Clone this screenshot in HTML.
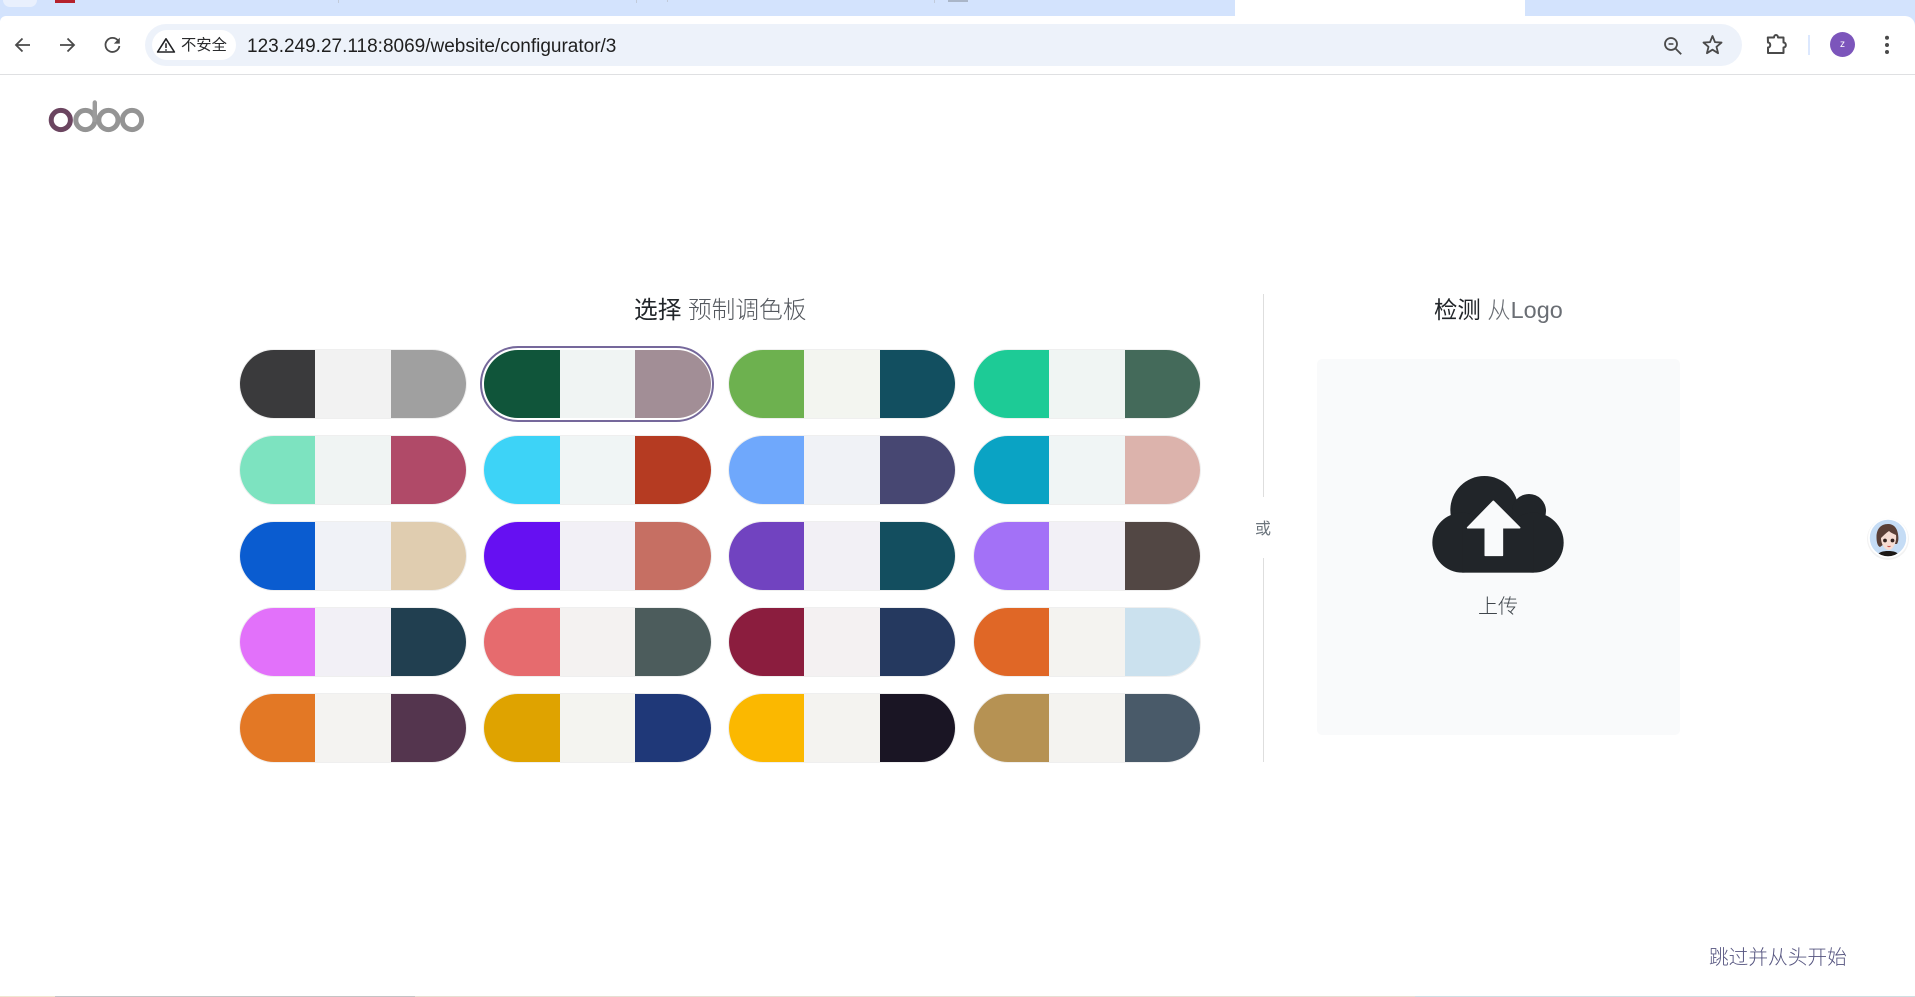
<!DOCTYPE html>
<html lang="zh">
<head>
<meta charset="utf-8">
<title>Odoo configurator</title>
<style>
html,body{margin:0;padding:0;background:#fff;width:1915px;height:997px;overflow:hidden}
body{position:relative;font-family:"Liberation Sans","Noto Sans CJK SC",sans-serif;color:#212529}
.a{position:absolute}
.t{position:absolute;white-space:nowrap;line-height:1}
.pill{position:absolute;width:226.5px;height:68px;border-radius:34px;overflow:hidden;display:flex;box-shadow:0 0 0 1px #efefef}
.pill i{display:block;flex:1 1 0}
.sel{position:absolute;border:2px solid #75689b;border-radius:40px;background:#fff;box-sizing:border-box}
</style>
</head>
<body>
<!-- tab strip -->
<div class="a" style="left:0;top:0;width:1915px;height:74px;background:#d3e3fd"></div>
<div class="a" style="left:1235px;top:0;width:290px;height:16px;background:#fff"></div>
<div class="a" style="left:1215px;top:0;width:20px;height:16px;background:#d3e3fd;border-bottom-right-radius:10px"></div>
<div class="a" style="left:1525px;top:0;width:20px;height:16px;background:#d3e3fd;border-bottom-left-radius:10px"></div>
<div class="a" style="left:3px;top:0;width:34px;height:7px;background:#e9f0fd;border-radius:0 0 14px 14px"></div>
<div class="a" style="left:55px;top:0;width:20px;height:3px;background:#b5212c"></div>
<div class="a" style="left:338px;top:0;width:1px;height:3px;background:#c2cbda"></div>
<div class="a" style="left:636px;top:0;width:1px;height:3px;background:#c2cbda"></div>
<div class="a" style="left:667px;top:0;width:1px;height:2px;background:#c2cbda"></div>
<div class="a" style="left:934px;top:0;width:1px;height:3px;background:#c2cbda"></div>
<div class="a" style="left:948px;top:0;width:20px;height:2px;background:#aab6c8"></div>
<!-- toolbar -->
<div class="a" style="left:0;top:16px;width:1915px;height:58px;background:#fff;border-radius:6px 10px 0 0;border-bottom:1px solid #dfe0e2"></div>
<div class="a" style="left:0;top:75px;width:1915px;height:922px;background:#fff"></div>
<div class="a" style="left:145px;top:24px;width:1597px;height:42px;background:#edf2fa;border-radius:21px"></div>
<div class="a" style="left:152px;top:30px;width:84px;height:30px;background:#fff;border-radius:15px"></div>
<div class="t" style="left:181px;top:38px;font-size:15.3px;color:#2a2b2d">不安全</div>
<div class="t" style="left:247px;top:37px;font-size:19px;color:#1f1f1f">123.249.27.118:8069/website/configurator/3</div>
<svg class="a" style="left:0;top:0" width="1915" height="75" viewBox="0 0 1915 75" fill="none" stroke="#4a4a4a" stroke-width="1.8">
  <path d="M30 45H16.5M22.5 38.5L16 45L22.5 51.5"/>
  <path d="M60 45H73.5M67.5 38.5L74 45L67.5 51.5"/>
  <path d="M118.3 41A7 7 0 1 0 119.4 46"/>
  <path d="M119.8 37.6v6h-6z" fill="#4a4a4a" stroke="none"/>
  <path d="M166 38.8L174.4 52H157.6Z" stroke="#202124" stroke-width="1.6" stroke-linejoin="round"/>
  <path d="M166 43.2V48M166 49.2V50.8" stroke="#202124" stroke-width="1.5"/>
  <circle cx="1671" cy="44" r="6"/>
  <path d="M1675.6 48.6L1681.2 54.2"/>
  <path d="M1668.6 44H1673.4" stroke-width="1.6"/>
  <path transform="translate(1712.5 45.5)" d="M0 -9.5L2.47 -3.4L9.03 -2.94L3.99 1.3L5.58 7.69L0 4.2L-5.58 7.69L-3.99 1.3L-9.03 -2.94L-2.47 -3.4Z" stroke-linejoin="round"/>
  <path d="M1767.8 37.5H1774C1774 34.2 1778 34.2 1778 37.5H1783.5V42.5C1786.6 42.5 1786.6 47.5 1783.5 47.5V53H1768V47.5C1771 47.5 1771 42.5 1768 42.5Z" stroke-width="2" stroke-linejoin="round"/>
  <path d="M1809 35V55" stroke="#d3e3fd" stroke-width="1.6"/>
  <circle cx="1887" cy="37.8" r="2" fill="#4a4a4a" stroke="none"/>
  <circle cx="1887" cy="45" r="2" fill="#4a4a4a" stroke="none"/>
  <circle cx="1887" cy="52" r="2" fill="#4a4a4a" stroke="none"/>
</svg>
<div class="a" style="left:1830px;top:32px;width:25px;height:25px;border-radius:50%;background:#7c55bb;color:#fff;font-size:10px;line-height:25px;text-align:center">z</div>

<!-- logo -->
<svg class="a" style="left:40px;top:95px" width="115" height="45" viewBox="40 95 115 45" fill="none" stroke-width="5">
  <circle cx="60.8" cy="120" r="9.6" stroke="#6b4560"/>
  <circle cx="85.4" cy="120" r="9.6" stroke="#949494"/>
  <path d="M94.8 102.5V120" stroke="#9c9c9c" stroke-linecap="round" stroke-width="4.4"/>
  <circle cx="108.4" cy="120" r="9.6" stroke="#949494"/>
  <circle cx="132" cy="120" r="9.6" stroke="#949494"/>
</svg>

<!-- titles -->
<div class="t" style="left:634px;top:300px;font-size:23.7px;color:#212529">选择 <span style="font-weight:300;color:#54585e">预制调色板</span></div>
<div class="t" style="left:1434px;top:299px;font-size:23.4px;color:#212529">检测 <span style="font-weight:300;color:#6a6e74">从Logo</span></div>

<!-- selected ring -->
<div class="sel" style="left:480px;top:346px;width:234px;height:76px"></div>

<!-- palettes -->
<div class="pill" style="left:239.5px;top:350px"><i style="background:#3a3a3c"></i><i style="background:#f2f2f2"></i><i style="background:#a0a0a0"></i></div>
<div class="pill" style="left:484px;top:350px;box-shadow:none"><i style="background:#10553a"></i><i style="background:#f0f4f3"></i><i style="background:#a28e96"></i></div>
<div class="pill" style="left:728.6px;top:350px"><i style="background:#6db14f"></i><i style="background:#f3f5f0"></i><i style="background:#124f60"></i></div>
<div class="pill" style="left:973.5px;top:350px"><i style="background:#1dcb96"></i><i style="background:#f0f5f3"></i><i style="background:#446a5a"></i></div>

<div class="pill" style="left:239.5px;top:436px"><i style="background:#7de3c0"></i><i style="background:#f0f4f3"></i><i style="background:#b04a68"></i></div>
<div class="pill" style="left:484px;top:436px"><i style="background:#3dd3f7"></i><i style="background:#f0f5f5"></i><i style="background:#b53b22"></i></div>
<div class="pill" style="left:728.6px;top:436px"><i style="background:#6fa8fc"></i><i style="background:#f0f2f6"></i><i style="background:#474772"></i></div>
<div class="pill" style="left:973.5px;top:436px"><i style="background:#0aa3c4"></i><i style="background:#f0f5f5"></i><i style="background:#dcb3ac"></i></div>

<div class="pill" style="left:239.5px;top:522px"><i style="background:#0a5cd0"></i><i style="background:#f0f2f7"></i><i style="background:#e0cdb0"></i></div>
<div class="pill" style="left:484px;top:522px"><i style="background:#6610f2"></i><i style="background:#f2f0f6"></i><i style="background:#c66f63"></i></div>
<div class="pill" style="left:728.6px;top:522px"><i style="background:#7143c0"></i><i style="background:#f2f0f5"></i><i style="background:#134e5f"></i></div>
<div class="pill" style="left:973.5px;top:522px"><i style="background:#a371f7"></i><i style="background:#f2f0f6"></i><i style="background:#524744"></i></div>

<div class="pill" style="left:239.5px;top:608px"><i style="background:#e271fa"></i><i style="background:#f2f0f6"></i><i style="background:#213f50"></i></div>
<div class="pill" style="left:484px;top:608px"><i style="background:#e66b6e"></i><i style="background:#f4f2f1"></i><i style="background:#4c5c5c"></i></div>
<div class="pill" style="left:728.6px;top:608px"><i style="background:#8b1d3e"></i><i style="background:#f4f1f2"></i><i style="background:#25395f"></i></div>
<div class="pill" style="left:973.5px;top:608px"><i style="background:#e06726"></i><i style="background:#f4f3f0"></i><i style="background:#cbe1ee"></i></div>

<div class="pill" style="left:239.5px;top:694px"><i style="background:#e37825"></i><i style="background:#f4f3f1"></i><i style="background:#54354e"></i></div>
<div class="pill" style="left:484px;top:694px"><i style="background:#dfa300"></i><i style="background:#f4f4f0"></i><i style="background:#1f3878"></i></div>
<div class="pill" style="left:728.6px;top:694px"><i style="background:#fbb800"></i><i style="background:#f4f3f0"></i><i style="background:#1a1524"></i></div>
<div class="pill" style="left:973.5px;top:694px"><i style="background:#b69253"></i><i style="background:#f4f3f0"></i><i style="background:#495a69"></i></div>

<!-- divider -->
<div class="a" style="left:1263px;top:294px;width:1px;height:203px;background:#dedede"></div>
<div class="a" style="left:1263px;top:558px;width:1px;height:204px;background:#dedede"></div>
<div class="t" style="left:1255px;top:522px;font-size:16px;color:#6c757d">或</div>

<!-- upload box -->
<div class="a" style="left:1317px;top:359px;width:363px;height:376px;background:#f9fafb;border-radius:5px"></div>
<svg class="a" style="left:1432px;top:476px" width="132" height="97" viewBox="577 588 396 291">
  <g fill="#212529">
    <circle cx="734" cy="690" r="102"/>
    <circle cx="868" cy="693" r="51"/>
    <circle cx="668" cy="788" r="90"/>
    <circle cx="882" cy="788" r="90"/>
    <rect x="668" y="720" width="214" height="158"/>
  </g>
  <path d="M761 664L684 743H737V826H788V743H840Z" fill="#f9fafb" stroke="#f9fafb" stroke-width="5" stroke-linejoin="round"/>
</svg>
<div class="t" style="left:1478px;top:597px;font-size:20px;font-weight:300;color:#3f454b">上传</div>

<!-- assistant avatar -->
<svg class="a" style="left:1864px;top:514px" width="48" height="48" viewBox="0 0 48 48">
  <circle cx="24" cy="25" r="21" fill="#000" opacity=".05"/>
  <circle cx="24" cy="24" r="20" fill="#fff"/>
  <clipPath id="av"><circle cx="24" cy="24" r="18.2"/></clipPath>
  <g clip-path="url(#av)">
    <rect width="48" height="48" fill="#c5dcf5"/>
    <path d="M12 44C13 38 19 37 24 37C30 37 35 38 36 44Z" fill="#1b1715"/>
    <path d="M24 10C16 10 12.5 16 12.5 23C12.5 28 13.5 32 16 33L20 30L33 30C34 28 35 26 34 20C33 14 30 10 24 10Z" fill="#5a3f36"/>
    <path d="M17 24C19 22 22 19 25 17C27 19 30 20 32 21C33 28 29 36 25 36C20 36 17 29 17 24Z" fill="#f6dcd2"/>
    <circle cx="21" cy="26.5" r="1.9" fill="#33231f"/>
    <circle cx="28.5" cy="26.5" r="1.9" fill="#33231f"/>
    <path d="M23.5 32Q25 33.3 26.5 32" stroke="#c4524f" stroke-width="1.1" fill="none"/>
  </g>
</svg>

<!-- skip -->
<div class="t" style="left:1709px;top:949px;font-size:19.7px;font-weight:300;color:#55547f">跳过并从头开始</div>

<!-- bottom strip -->
<div class="a" style="left:0;top:996px;width:55px;height:1px;background:#f0e6d0"></div>
<div class="a" style="left:55px;top:996px;width:360px;height:1px;background:#c4c4c4"></div>
<div class="a" style="left:415px;top:996px;width:1000px;height:1px;background:#e6dfd2"></div>
<div class="a" style="left:1415px;top:996px;width:500px;height:1px;background:#cfdfe2"></div>
</body>
</html>
